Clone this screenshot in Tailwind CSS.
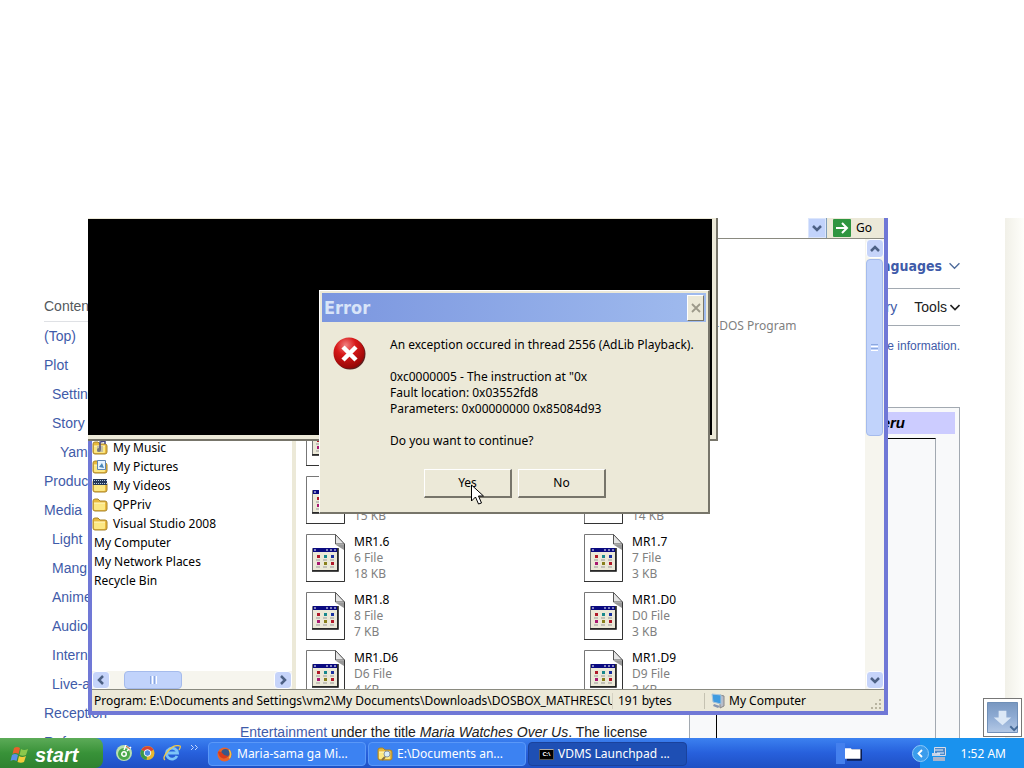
<!DOCTYPE html>
<html lang="en">
<head>
    <meta charset="UTF-8">
    <meta name="viewport" content="width=device-width, initial-scale=1.0">
    <title>Desktop</title>
    <script src="https://cdn.jsdelivr.net/npm/@tailwindcss/browser@4"></script>
</head>
<body class="h-screen flex flex-col overflow-hidden bg-white text-[12px] leading-4 text-black font-['Noto_Sans','DejaVu_Sans_Condensed',sans-serif]">
    <!-- icon shapes used more than once -->
    <svg class="hidden">
        <symbol id="folder" viewBox="0 0 16 16">
            <path d="M1 4q0-2 2-2h3l2 2h5q2 0 2 2v6q0 2-2 2H3q-2 0-2-2z" fill="#e9b93c" stroke="#a8842a"/>
            <path d="M2 6h11v6q0 1-1 1H3q-1 0-1-1z" fill="#fce884"/>
            <path d="M2 6h11" stroke="#fff8c8"/>
        </symbol>
        <symbol id="file" viewBox="0 0 39 48">
            <path d="M.5.5h29l9 10v37H.5z" fill="#fff" stroke="#777"/>
            <path d="M38.5 10v37.5H0" fill="none" stroke="#333"/>
            <path d="M29.5 .5v9.500h9z" fill="#e4e4e4" stroke="#555"/>
            <path d="M30 11h8v5z" fill="#999"/>
            <path d="M6.500 14.500h25v22h-25z" fill="#ece9d8" stroke="#777"/>
            <path d="M32 14v23H6" fill="none" stroke="#111" stroke-width="1.500"/>
            <path d="M7 14h24v4H7z" fill="#0a0a80"/>
            <path d="M8 16h2M20 16h2M24 16h2M28 16h2" stroke="#fff"/>
            <path d="M11 21h3v3h-3zM25 28h3v3h-3z" fill="#b01828"/>
            <path d="M18 21h3v3h-3z" fill="#18888c"/>
            <path d="M25 21h3v3h-3z" fill="#1830a0"/>
            <path d="M11 28h3v3h-3z" fill="#a81870"/>
            <path d="M18 28h3v3h-3z" fill="#88801c"/>
            <path d="M10 26h4M17 26h4M24 26h4M10 33h4M17 33h4M24 33h4" stroke="#999"/>
        </symbol>
        <symbol id="down" viewBox="0 0 10 10"><path d="M1 3l4 4 4-4" fill="none" stroke="#4d6185" stroke-width="2.500"/></symbol>
    </svg>

    <div class="h-[218px] shrink-0"></div>
    <main class="relative flex-1 overflow-hidden">

        <!-- browser page behind the windows -->
        <div class="absolute inset-0 flex text-[14px] font-['Liberation_Sans',sans-serif] text-[#202122]">
            <nav class="w-[196px] pl-[44px] pt-[77px] text-[#3f5ba9]">
                <h2 class="h-[27px] leading-[22px] border-b border-[#dfe1e5] text-[#54595d]">Contents</h2>
                <ul class="leading-[29px]">
                    <li><a href="#">(Top)</a></li>
                    <li><a href="#">Plot</a></li>
                    <li class="pl-2"><a href="#">Setting</a></li>
                    <li class="pl-2"><a href="#">Story</a></li>
                    <li class="pl-4"><a href="#">Yama</a></li>
                    <li><a href="#">Produc</a></li>
                    <li><a href="#">Media</a></li>
                    <li class="pl-2"><a href="#">Light</a></li>
                    <li class="pl-2"><a href="#">Mang</a></li>
                    <li class="pl-2"><a href="#">Anime</a></li>
                    <li class="pl-2"><a href="#">Audio</a></li>
                    <li class="pl-2"><a href="#">Intern</a></li>
                    <li class="pl-2"><a href="#">Live-a</a></li>
                    <li><a href="#">Reception</a></li>
                    <li><a href="#">References</a></li>
                </ul>
            </nav>
            <article class="flex-1 flex flex-col ml-[44px] mr-[45px]">
                <header class="pt-[27px]">
                    <div class="h-[44px] flex items-center justify-end gap-[7px] border-b border-[#a2a9b1] font-bold text-[14px] text-[#3f5ba9] pb-[2px] font-['DejaVu_Sans_Condensed','DejaVu_Sans',sans-serif]">
                        <a href="#">Languages</a>
                        <svg class="w-[11px] h-[11px]" viewBox="0 0 10 10"><path d="M.5 3L5 7.500 9.500 3" fill="none" stroke="#4d6a9a" stroke-width="1.200"/></svg>
                    </div>
                    <div class="h-[37px] flex items-center justify-end border-b border-[#a2a9b1]">
                        <a href="#" class="text-[#3f5ba9] mr-[17px]">View history</a>
                        <button class="flex items-center gap-[3px]">Tools <svg class="w-[10px] h-[10px]" viewBox="0 0 10 10"><path d="M.5 3L5 7.500 9.500 3" fill="none" stroke="#222" stroke-width="1.600"/></svg></button>
                    </div>
                    <p class="pt-3 text-right text-[12px] text-[#3f5ba9]"><a href="#">more information.</a></p>
                </header>
                <div class="flex-1 flex mt-[53px]">
                    <div class="flex-1 flex flex-col justify-end leading-[22px] whitespace-nowrap">
                        <p class="-mb-[5px]"><a href="#" class="text-[#3f5ba9]">Entertainment</a> under the title <i>Maria Watches Over Us</i>. The license</p>
                    </div>
                    <aside class="w-[271px] p-1 pb-0 flex flex-col bg-[#f8f9fa] border border-b-0 border-[#a2a9b1]">
                        <h3 class="h-[22px] leading-[22px] bg-[#ccccff] pr-[50px] text-right text-[15px] font-bold italic text-black">Miteru</h3>
                        <div class="flex-1 mt-1 ml-[22px] mr-[19px] border-t border-l border-t-black border-l-black border-r border-r-[#a2a9b1]"></div>
                    </aside>
                </div>
            </article>
            <div class="w-[19px] bg-gradient-to-r from-[#f1f0e8] to-[#fefefa]"></div>
        </div>

        <button class="absolute right-[2px] bottom-[1px] w-[39px] h-[39px] p-[3px] border border-[#777] bg-white" aria-label="Scroll down">
            <svg class="w-full h-full" viewBox="0 0 32 32">
                <defs><linearGradient id="dl" x1="0" y1="0" x2="0" y2="1"><stop offset="0" stop-color="#7897c0"/><stop offset=".5" stop-color="#8facd4"/><stop offset="1" stop-color="#b4c9e6"/></linearGradient></defs>
                <path d="M.5.5h31v31H.5z" fill="url(#dl)" stroke="#6c8cb6"/>
                <path d="M12 9h8v7h5l-9 8-9-8h5z" fill="#dce8f6"/>
                <path d="M24 25l4 4 4-4" stroke="#466a96" stroke-width="2" fill="none"/>
            </svg>
        </button>

        <!-- explorer window -->
        <section class="absolute left-[88px] top-0 w-[800px] h-[497px] flex flex-col bg-white border-4 border-t-0 border-[#7078d6]">
            <div class="h-[21px] shrink-0 flex justify-end bg-[#ece9d8] border-b border-[#8a8a80]">
                <input type="text" aria-label="Address" class="flex-1 bg-white">
                <button class="w-[18px] flex items-center justify-center bg-[#c2d3fb] border border-[#dce6fc]" aria-label="Show addresses"><svg class="w-[10px] h-[10px]"><use href="#down"/></svg></button>
                <button class="w-[58px] pl-[6px] flex items-center gap-[5px] border-l border-[#7f9db9]">
                    <svg class="w-[18px] h-[18px]" viewBox="0 0 18 18"><rect width="18" height="18" rx="1" fill="#2f9540"/><path d="M3 9h11M9 4l5 5-5 5" fill="none" stroke="#fff" stroke-width="2"/></svg>
                    Go
                </button>
            </div>
            <div class="flex-1 min-h-0 flex">
                <div class="w-[200px] flex flex-col">
                    <ul class="flex-1 pt-[199px] leading-[19px]">
                        <li class="flex items-center gap-[5px]"><svg class="w-4 h-4"><use href="#folder"/><path d="M5 6h6v6H5z" fill="#c8c0a0"/><path d="M8 10V2l5-1v3" fill="none" stroke="#454580" stroke-width="1.500"/><circle cx="7" cy="10" r="2" fill="#777"/></svg>My Music</li>
                        <li class="flex items-center gap-[5px]"><svg class="w-4 h-4"><use href="#folder"/><path d="M5.500 1.500h8v9h-8z" fill="#e8f4ff" stroke="#5f86b4"/><path d="M7 8l3-4 2 5z" fill="#4c88b8"/></svg>My Pictures</li>
                        <li class="flex items-center gap-[5px]"><svg class="w-4 h-4"><use href="#folder"/><path d="M1 1h14v6H1z" fill="#263858"/><path d="M2 2.500h13M2 5.500h13" stroke="#b8d0e8" stroke-dasharray="1 1"/></svg>My Videos</li>
                        <li class="flex items-center gap-[5px]"><svg class="w-4 h-4"><use href="#folder"/></svg>QPPriv</li>
                        <li class="flex items-center gap-[5px]"><svg class="w-4 h-4"><use href="#folder"/></svg>Visual Studio 2008</li>
                        <li class="pl-[2px]">My Computer</li>
                        <li class="pl-[2px]">My Network Places</li>
                        <li class="pl-[2px]">Recycle Bin</li>
                    </ul>
                    <div class="h-[18px] flex bg-[#f6f5ee]">
                        <button class="w-[18px] flex items-center justify-center rounded-sm bg-[#c6d4fa] border border-white" aria-label="Scroll left"><svg class="w-[10px] h-[10px] rotate-90"><use href="#down"/></svg></button>
                        <div class="w-[58px] ml-[14px] flex items-center justify-center gap-px rounded-sm bg-[#c1d3fb] border border-[#a5bbec]">
                            <i class="w-px h-2 bg-[#8ca8e0]"></i><i class="w-px h-2 bg-white"></i><i class="w-px h-2 bg-[#8ca8e0]"></i><i class="w-px h-2 bg-white"></i>
                        </div>
                        <button class="w-[18px] ml-auto flex items-center justify-center rounded-sm bg-[#c6d4fa] border border-white" aria-label="Scroll right"><svg class="w-[10px] h-[10px] -rotate-90"><use href="#down"/></svg></button>
                    </div>
                </div>
                <div class="w-1 bg-[#ece9d8]"></div>
                <div id="files" class="flex-1 min-h-0 overflow-hidden grid grid-cols-[278px_1fr] auto-rows-[58px] content-start pl-[10px] pt-[63px]"></div>
                <div class="w-[19px] flex flex-col pl-px bg-[#f6f5ee]">
                    <button class="h-[19px] flex items-center justify-center rounded-sm bg-[#c6d4fa] border border-white" aria-label="Scroll up"><svg class="w-[10px] h-[10px] rotate-180"><use href="#down"/></svg></button>
                    <div class="h-[177px] mt-px mr-px flex flex-col items-center justify-center gap-px rounded-sm bg-[#c1d3fb] border border-[#a5bbec]">
                        <i class="w-[7px] h-px bg-[#8ca8e0]"></i><i class="w-[7px] h-px bg-white"></i><i class="w-[7px] h-px bg-[#8ca8e0]"></i><i class="w-[7px] h-px bg-white"></i>
                    </div>
                    <button class="h-[18px] mt-auto flex items-center justify-center rounded-sm bg-[#c6d4fa] border border-white" aria-label="Scroll down"><svg class="w-[10px] h-[10px]"><use href="#down"/></svg></button>
                </div>
            </div>
            <footer class="h-[22px] shrink-0 flex items-center bg-[#ece9d8] border-t border-[#8a8a80] whitespace-nowrap">
                <span class="w-[520px] pl-[2px] overflow-hidden">Program: E:\Documents and Settings\vm2\My Documents\Downloads\DOSBOX_MATHRESCUE</span>
                <span class="w-[92px] pl-[5px] border-l border-[#d5d2c2]">191 bytes</span>
                <span class="flex-1 pl-[6px] flex items-center gap-[3px] border-l border-[#c5c2b2]">
                    <svg class="w-[15px] h-4" viewBox="0 0 15 16"><path d="M9 2l4 1v10l-4 2z" fill="#b8bcc8" stroke="#888"/><path d="M1 1l9 1v9l-8-2z" fill="#3f9be0" stroke="#a8c4dc"/><path d="M3 11l6 2-2 2-5-2z" fill="#8896b0"/></svg>
                    My Computer
                </span>
                <svg class="w-[14px] h-[14px] self-end" viewBox="0 0 14 14"><path d="M9 2h2v2H9zM5 6h2v2H5zM9 6h2v2H9zM1 10h2v2H1zM5 10h2v2H5zM9 10h2v2H9z" fill="#b8b4a0"/></svg>
            </footer>
        </section>

        <!-- console window -->
        <section class="absolute left-[88px] top-0 w-[630px] h-[223px] bg-[#ece9d8] border-r-2 border-b-2 border-[#77756a] pt-px pr-1 pb-1">
            <div class="h-full bg-black"></div>
        </section>

        <!-- error dialog -->
        <section role="alertdialog" aria-labelledby="title" class="absolute left-[319px] top-[72px] w-[391px] h-[224px] flex flex-col bg-[#ece9d8] p-[2px] border border-t-white border-l-white border-r-2 border-b-2 border-r-[#77756a] border-b-[#77756a]">
            <div class="h-[29px] shrink-0 flex items-center justify-between px-[2px] bg-gradient-to-r from-[#7b96df] to-[#a0bbee]">
                <h1 id="title" class="text-[18px] font-bold text-[#d8e4f8] font-['DejaVu_Sans_Condensed','DejaVu_Sans',sans-serif]">Error</h1>
                <button class="w-[17px] h-[26px] flex items-center justify-center bg-[#ece9d8] border border-t-white border-l-white border-r-[#77756a] border-b-[#77756a]" aria-label="Close"><svg class="w-[10px] h-[10px]" viewBox="0 0 10 10"><path d="M1 1l8 8M9 1L1 9" stroke="#9c998a" stroke-width="1.800"/></svg></button>
            </div>
            <div class="flex gap-[23px] pl-[11px] pt-[15px]">
                <svg class="w-[34px] h-[34px] shrink-0" viewBox="0 0 34 34">
                    <defs><radialGradient id="red" cx=".4" cy=".25" r=".8"><stop offset="0" stop-color="#f08080"/><stop offset=".4" stop-color="#d81818"/><stop offset="1" stop-color="#8c0404"/></radialGradient></defs>
                    <circle cx="17" cy="17" r="15.500" fill="#5a2020"/>
                    <circle cx="16" cy="16" r="15.500" fill="url(#red)"/>
                    <path d="M10 10l13 13M23 10L10 23" stroke="#fff" stroke-width="4.500"/>
                </svg>
                <p class="whitespace-nowrap">An exception occured in thread 2556 (AdLib Playback).<br><br>0xc0000005 - The instruction at "0x<br>Fault location: 0x03552fd8<br>Parameters: 0x00000000 0x85084d93<br><br>Do you want to continue?</p>
            </div>
            <div class="flex justify-center gap-[6px] mt-5 pl-[2px]">
                <button class="w-[88px] h-[29px] border border-t-white border-l-white border-r-2 border-b-2 border-r-[#77756a] border-b-[#77756a]">Yes</button>
                <button class="w-[88px] h-[29px] border border-t-white border-l-white border-r-2 border-b-2 border-r-[#77756a] border-b-[#77756a]">No</button>
            </div>
        </section>
        <svg class="absolute left-[471px] top-[266px] w-[14px] h-[22px]" viewBox="0 0 14 22"><path d="M.5 1v16l4-4 3 7 3-1-3-7h5z" fill="#fff" stroke="#000"/></svg>
    </main>

    <!-- taskbar -->
    <footer class="h-[30px] shrink-0 flex items-stretch bg-gradient-to-b from-[#3c81f0] via-[#2760dc] to-[#1f50c4] text-white whitespace-nowrap">
        <button class="w-[103px] pl-[10px] pt-[3px] flex items-center gap-[5px] rounded-r-lg bg-gradient-to-b from-[#5cab58] via-[#389238] to-[#2f8230] text-[20px] font-bold italic font-['Liberation_Sans',sans-serif]">
            <svg class="w-5 h-5" viewBox="0 0 20 20"><path d="M4 3q3-2 6 0L8.500 9q-3-2-6 0z" fill="#e8602c"/><path d="M11 4q3 2 7 0l-2 6q-3 1.500-6.500 0z" fill="#8cc84c"/><path d="M2 10q3-2 6 0L6.500 16q-3-2-6 0z" fill="#5a90e8"/><path d="M9 11q3 2 7 0l-2 6q-3 1.500-6.500 0z" fill="#f4cc3c"/></svg>
            start
        </button>
        <div class="w-[105px] pl-[13px] flex items-center gap-[8px]">
            <svg class="w-4 h-4" viewBox="0 0 16 16"><circle cx="8" cy="8" r="8" fill="#b8e0b0"/><circle cx="8" cy="9" r="4.500" fill="#fff" stroke="#4ba84c" stroke-width="3"/><circle cx="8" cy="9" r="1.500" fill="#4ba84c"/><path d="M8 5l2-5M11 6l4-4" stroke="#fff" stroke-width="1.500"/><path d="M10 1l4 3" stroke="#e06040"/></svg>
            <svg class="w-[15px] h-4" viewBox="0 0 16 16"><circle cx="8" cy="8" r="7.500" fill="#e8b830"/><path d="M8 8L1.500 4.500A7.500 7.500 0 0 1 14.500 4.500z" fill="#d84434"/><path d="M8 8L1.500 4.500A7.500 7.500 0 0 0 7 15.500z" fill="#3c9848"/><circle cx="8" cy="8" r="3.500" fill="#4c88e0" stroke="#fff"/></svg>
            <svg class="w-[18px] h-4" viewBox="0 0 18 16"><path d="M14 11A5.500 5.500 0 1 1 14.500 8H5" fill="none" stroke="#7cc4f8" stroke-width="2.800"/><path d="M2 15Q-1 13 5 6T17 1q1 1-1 4" fill="none" stroke="#f0c848" stroke-width="1.300"/></svg>
            <svg class="w-[9px] h-[7px] mb-3 ml-px" viewBox="0 0 9 7"><path d="M1 1l2.500 2.500L1 6M5 1l2.500 2.500L5 6" fill="none" stroke="#c4d8fc"/></svg>
        </div>
        <div class="flex-1 flex items-stretch gap-[2px] pt-1 pb-[2px]">
            <button class="w-[158px] pl-[8px] flex items-center gap-[5px] rounded-sm bg-[#3c82f2] border border-[#5a98f8]">
                <svg class="w-[15px] h-[15px]" viewBox="0 0 16 16"><circle cx="8" cy="8" r="7.500" fill="#e8642c"/><circle cx="9" cy="6.500" r="4.500" fill="#385888"/><path d="M1 5q3-1 5 2t6 2q-2 4-6 3T1 5z" fill="#d83c1c"/><path d="M13 3q3 5 0 9" fill="none" stroke="#f8c440" stroke-width="1.500"/></svg>
                Maria-sama ga Mi...
            </button>
            <button class="w-[158px] pl-[8px] flex items-center gap-[4px] rounded-sm bg-[#3c82f2] border border-[#5a98f8]">
                <svg class="w-4 h-4"><use href="#folder"/><circle cx="10" cy="8" r="3" fill="#d8ecf8" stroke="#8894a0"/><path d="M8 11l-3 3" stroke="#887040" stroke-width="2"/></svg>
                E:\Documents an...
            </button>
            <button class="w-[159px] pl-[10px] flex items-center gap-[4px] rounded-sm bg-[#1e4fb4] border border-[#1a429c]">
                <span class="w-[15px] h-[11px] bg-black border border-t-[#aaa] border-[#555] text-[6px] leading-[8px] font-bold">C:\</span>
                VDMS Launchpad ...
            </button>
        </div>
        <div class="w-[26px] mr-[50px] my-[3px] flex items-center justify-end">
            <div class="w-[9px] h-[21px] bg-[#4480ee]"></div>
            <svg class="w-[18px] h-[15px]" viewBox="0 0 18 15"><path d="M2 3h16v12H2z" fill="#0a1c50"/><path d="M0 2h6l1 1h9v10H0z" fill="#fff"/></svg>
        </div>
        <div class="w-[112px] pr-[18px] pt-px flex items-center gap-[2px] bg-linear-to-r from-transparent from-[8px] to-[#1a92ee] to-[8px]">
            <button class="w-[17px] h-[17px] flex items-center justify-center rounded-full bg-[#3a9cec] border border-[#8cc8f8]" aria-label="Show hidden icons"><svg class="w-[9px] h-[9px]" viewBox="0 0 9 9"><path d="M6 1L2.500 4.500 6 8" fill="none" stroke="#fff" stroke-width="1.800"/></svg></button>
            <svg class="w-4 h-4" viewBox="0 0 16 16"><path d="M3.500 1.500h11v8h-11z" fill="#4c88c8" stroke="#d8dce8"/><path d="M1 7h8v3H1z" fill="#c8d4e8"/><path d="M2 11h12v4H2z" fill="#a8b4cc"/><path d="M4 4h8M6 7h7" stroke="#e8f0fc"/></svg>
            <time class="ml-auto">1:52 AM</time>
        </div>
    </footer>

    <script>
        // [name, type, size] in reading order, two per row
        const files = [
            ['', '', ''], ['', 'Shortcut to MS-DOS Program', ''],
            ['', '', ''], ['', '', ''],
            ['', '', ''], ['', '', ''],
            ['', '', '15 KB'], ['', '', '14 KB'],
            ['MR1.6', '6 File', '18 KB'], ['MR1.7', '7 File', '3 KB'],
            ['MR1.8', '8 File', '7 KB'], ['MR1.D0', 'D0 File', '3 KB'],
            ['MR1.D6', 'D6 File', '4 KB'], ['MR1.D9', 'D9 File', '2 KB'],
        ];
        document.getElementById('files').innerHTML = files.map(([name, type, size]) => `
            <div class="flex gap-[9px] whitespace-nowrap">
                <svg class="w-[39px] h-12"><use href="#file"/></svg>
                <p class="text-[#808080]"><span class="text-black">${name}</span><br>${type}<br>${size}</p>
            </div>`).join('');
    </script>
</body>
</html>
